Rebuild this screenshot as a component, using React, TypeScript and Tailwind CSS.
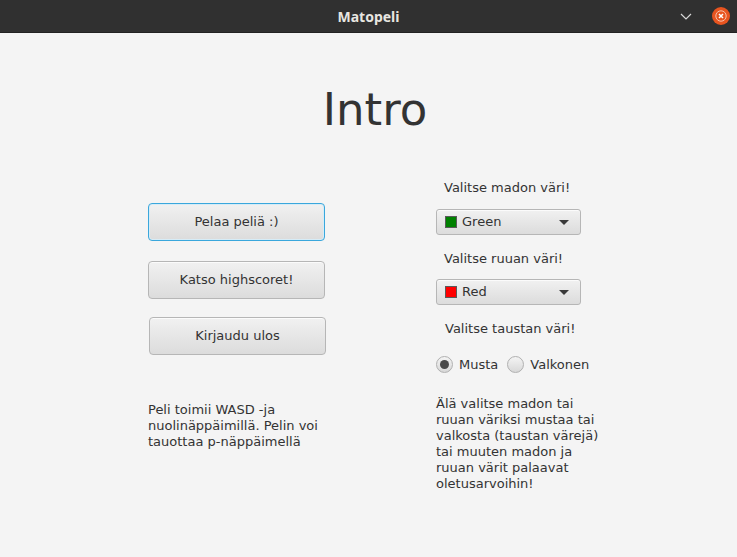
import React from 'react'

const font = { fontFamily: "'DejaVu Sans', 'Liberation Sans', sans-serif" }

function FxButton({ label, focused, className }: { label: string; focused?: boolean; className?: string }) {
  return (
    <button
      className={`w-[177px] h-[38px] rounded-[4px] border text-[13px] text-[#333] bg-gradient-to-b from-[#f1f1f1] to-[#dcdcdc] ${focused ? 'border-[#3aa7dc] shadow-[inset_0_0_0_1px_#d6ecf7]' : 'border-[#b6b6b6] shadow-[inset_0_1px_0_#fbfbfb]'} ${className ?? ''}`}
    >
      {label}
    </button>
  )
}

function Combo({ label, color }: { label: string; color: string }) {
  return (
    <div className="w-[145px] h-[26px] rounded-[3px] border border-[#b6b6b6] bg-gradient-to-b from-[#f1f1f1] to-[#dcdcdc] shadow-[inset_0_1px_0_#fbfbfb] flex items-center pl-[8px] pr-[8px]">
      <span className="w-[12px] h-[12px] border border-[#5a5a5a]" style={{ background: color }} />
      <span className="ml-[5px] text-[13px] text-[#333] flex-1">{label}</span>
      <svg width="10" height="5" viewBox="0 0 10 5" className="mr-[3px]">
        <path d="M0 0 L10 0 L5 5 Z" fill="#3a3a3a" />
      </svg>
    </div>
  )
}

function Radio({ label, checked }: { label: string; checked?: boolean }) {
  return (
    <div className="flex items-center">
      <span className="w-[17px] h-[17px] rounded-full border border-[#b0b0b0] bg-gradient-to-b from-[#f4f4f4] to-[#d8d8d8] flex items-center justify-center">
        {checked && <span className="w-[9px] h-[9px] rounded-full bg-[#4a4a4a]" />}
      </span>
      <span className="ml-[6px] text-[13px] text-[#333]">{label}</span>
    </div>
  )
}

export default function App() {
  return (
    <div className="w-[737px] h-[557px] bg-[#f4f4f4] flex flex-col overflow-hidden" style={font}>
      {/* title bar */}
      <div className="h-[33px] bg-[#303030] border-b border-[#222] flex items-center relative shrink-0">
        <div className="flex-1 text-center text-[14px] font-bold text-[#e8e6e1]" style={{ fontFamily: "'Noto Sans', 'DejaVu Sans', sans-serif" }}>
          Matopeli
        </div>
        <div className="absolute right-[7px] top-[7px] flex items-center gap-[20px]">
          <svg width="12" height="7" viewBox="0 0 12 7">
            <path d="M1 1 L6 6 L11 1" stroke="#d8d8d8" strokeWidth="1.2" fill="none" />
          </svg>
          <svg width="18" height="18" viewBox="0 0 18 18">
            <circle cx="9" cy="9" r="9" fill="#e8541f" />
            <circle cx="9" cy="9" r="5.2" fill="none" stroke="#f6c0aa" strokeWidth="1" />
            <path d="M7 7 L11 11 M11 7 L7 11" stroke="#fff" strokeWidth="1.5" />
          </svg>
        </div>
      </div>

      <div className="pl-[13px] text-center text-[45px] leading-[52px] text-[#333] mt-[51px]">Intro</div>

      <div className="flex mt-[42px]">
        {/* left column */}
        <div className="ml-[148px] w-[178px] flex flex-col pt-[25px]">
          <FxButton label="Pelaa peliä :)" focused />
          <FxButton label="Katso highscoret!" className="mt-[20px]" />
          <FxButton label="Kirjaudu ulos" className="mt-[18px] ml-[1px]" />
          <p className="mt-[47px] text-[13px] leading-[16px] text-[#333]">
            Peli toimii WASD -ja
            <br />
            nuolinäppäimillä. Pelin voi
            <br />
            tauottaa p-näppäimellä
          </p>
        </div>

        {/* right column */}
        <div className="ml-[110px] w-[190px] flex flex-col pt-[2px]">
          <div className="pl-[8px] text-[13px] leading-[16px] text-[#333]">Valitse madon väri!</div>
          <div className="mt-[13px]">
            <Combo label="Green" color="#008000" />
          </div>
          <div className="mt-[16px] pl-[8px] text-[13px] leading-[16px] text-[#333]">Valitse ruuan väri!</div>
          <div className="mt-[12px]">
            <Combo label="Red" color="#ff0000" />
          </div>
          <div className="mt-[16px] pl-[9px] text-[13px] leading-[16px] text-[#333]">Valitse taustan väri!</div>
          <div className="mt-[18px] flex items-center gap-[9px]">
            <Radio label="Musta" checked />
            <Radio label="Valkonen" />
          </div>
          <p className="mt-[21px] text-[13px] leading-[16px] text-[#333]">
            Älä valitse madon tai
            <br />
            ruuan väriksi mustaa tai
            <br />
            valkosta (taustan värejä)
            <br />
            tai muuten madon ja
            <br />
            ruuan värit palaavat
            <br />
            oletusarvoihin!
          </p>
        </div>
      </div>
    </div>
  )
}
